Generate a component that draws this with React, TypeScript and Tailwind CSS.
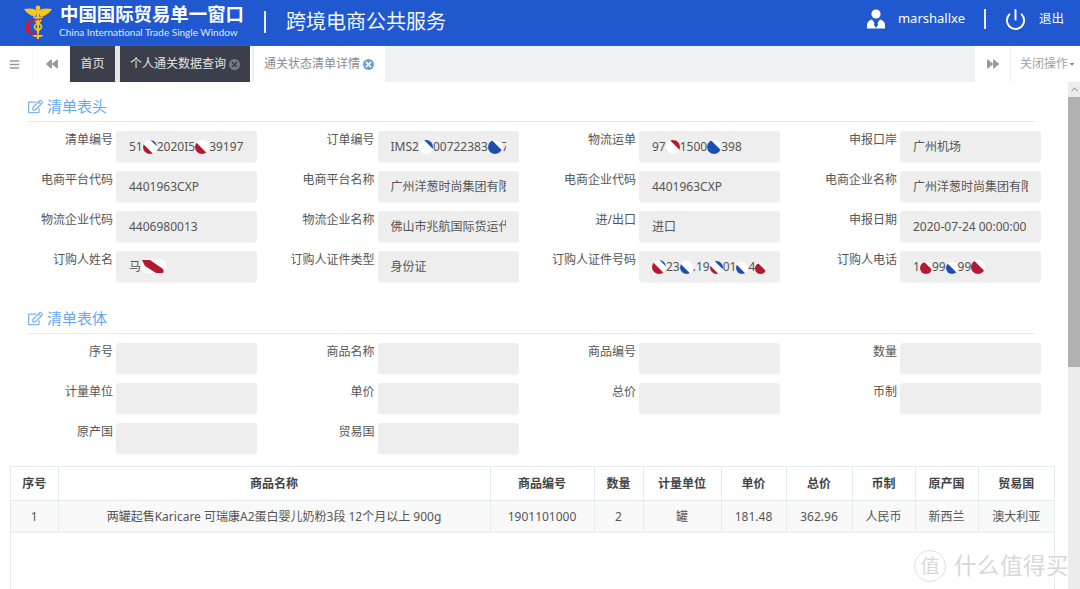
import { useId, type ReactNode } from "react";
import { FaBackward, FaForward, FaRegEdit, FaCaretDown, FaBars } from "react-icons/fa";
import { Power, X, ChevronUp } from "lucide-react";

const RED = "#b5182f";
const BLUE = "#1f4fae";

// 打码的小圆块
function Blob({ w = 14, low, lowY = 11, up, upY = 4 }: { w?: number; low?: string; lowY?: number; up?: string; upY?: number }) {
  const id = useId();
  return (
    <svg viewBox="0 0 16 16" width={w} height={w} className="inline-block align-[-3px]">
      <clipPath id={id}>
        <circle cx="8" cy="8" r="8" />
      </clipPath>
      <circle cx="8" cy="8" r="8" fill="#fff" />
      <g clipPath={`url(#${id})`}>
        <g transform="rotate(45 8 8)">
          {low && <rect x="-6" y={lowY} width="28" height="16" fill={low} />}
          {up && <rect x="-6" y={upY - 16} width="28" height="16" fill={up} />}
        </g>
      </g>
    </svg>
  );
}

function NameBlob() {
  return (
    <svg viewBox="0 0 26 16" width="26" height="16" className="inline-block align-[-3px]">
      <rect x="0" y="1" width="26" height="14" rx="7" fill="#fff" />
      <path d="M1 2h8l13 9c1 2 1 4-1 4h-6L4 8z" fill={RED} />
    </svg>
  );
}

function Logo() {
  return (
    <svg viewBox="0 0 28 36" width="28" height="36" className="shrink-0">
      <path d="M14 7C10 4 5 4 0 5c2 3 3 4 5 5 1 1 3 2 4 2h3zM14 7c4-3 9-3 14-2-2 3-3 4-5 5-1 1-3 2-4 2h-3z" fill="#f6c81c" />
      <circle cx="14" cy="4" r="2.4" fill="#f6c81c" />
      <rect x="13" y="4" width="2" height="31" fill="#f6c81c" />
      <path d="M9 13c8 0 10 3 5 6s-5 6 2 7M19 13c-8 0-10 3-5 6s5 6-2 7" fill="none" stroke="#f6c81c" strokeWidth="1.6" />
      <path d="M21 15C12 13 1 17 1 24c0 6 8 8 16 6-6 0-12-2-12-7 0-5 8-8 16-8z" fill="#d9172b" />
      <path d="M8 31h12l-3 2h-6z" fill="#f6c81c" />
    </svg>
  );
}

function UserIcon() {
  return (
    <svg viewBox="0 0 18 20" width="18" height="20">
      <circle cx="9" cy="5" r="4.6" fill="#fff" />
      <path d="M5 10.500C2 11.500 0 13 0 16v3.500h18V16c0-3-2-4.500-5-5.500L10.500 14l.8 1.500L9 19l-2.300-3.500L7.500 14z" fill="#fff" />
    </svg>
  );
}

function SectionTitle({ children }: { children: ReactNode }) {
  return (
    <div className="ml-[18px] mr-[33px] h-[26px] flex items-center border-b border-[#e7eaec] pb-[4px] text-[15px] text-[#64a8ee]">
      <FaRegEdit className="w-[15px] h-[15px] mr-[4px] text-[#7db4f0]" />
      {children}
    </div>
  );
}

function Field({ label, children }: { label: string; children?: ReactNode }) {
  return (
    <div className="flex">
      <div className="w-[103px] shrink-0 text-right text-[12px] leading-[18px] text-[#555]">{label}</div>
      <div className="ml-[3px] w-[141px] h-[31px] rounded-[3px] bg-[#eeeeee] shadow-[0_1px_1px_rgba(0,0,0,0.04)] pl-[13px] pr-[13px] text-[12px] leading-[31px] text-[#555]">
        <div className="overflow-hidden whitespace-nowrap h-full">{children}</div>
      </div>
    </div>
  );
}

const columns = [
  { title: "序号", value: "1", w: "w-[47px]" },
  { title: "商品名称", value: "两罐起售Karicare 可瑞康A2蛋白婴儿奶粉3段 12个月以上 900g", w: "w-[432px]" },
  { title: "商品编号", value: "1901101000", w: "w-[104px]" },
  { title: "数量", value: "2", w: "w-[49px]" },
  { title: "计量单位", value: "罐", w: "w-[78px]" },
  { title: "单价", value: "181.48", w: "w-[65px]" },
  { title: "总价", value: "362.96", w: "w-[66px]" },
  { title: "币制", value: "人民币", w: "w-[63px]" },
  { title: "原产国", value: "新西兰", w: "w-[63px]" },
  { title: "贸易国", value: "澳大利亚", w: "w-[76px]" },
];

export default function App() {
  return (
    <div className="w-[1080px] h-[589px] overflow-hidden relative flex flex-col bg-white font-['Noto_Sans','Noto_Sans_CJK_SC',sans-serif]">
      {/* 顶部 */}
      <header className="h-[46px] shrink-0 flex items-center bg-[#2058cf] border-b border-[#1d62e0] text-white">
        <div className="ml-[24px] -mt-[2px]">
          <Logo />
        </div>
        <div className="ml-[7px] w-[190px] -mt-[5px]">
          <div className="ml-[1px] text-[18.4px] font-bold leading-[24px] whitespace-nowrap">中国国际贸易单一窗口</div>
          <div className="font-['Lato',sans-serif] text-[10px] leading-[13px] whitespace-nowrap text-[#dfe8fb]">China International Trade Single Window</div>
        </div>
        <div className="ml-[15px] w-[2px] h-[22px] bg-[#e6ecfa] -mt-[2px]" />
        <div className="ml-[20px] text-[20px] leading-[26px] -mt-[1px] text-[#f3f6fd]">跨境电商公共服务</div>
        <div className="ml-auto flex items-center -mt-[7px]">
          <UserIcon />
          <span className="ml-[13px] text-[13px]">marshallxe</span>
          <div className="ml-[19px] w-[2px] h-[20px] bg-[#e6ecfa]" />
          <Power className="ml-[18px] w-[23px] h-[23px]" strokeWidth={2} />
          <span className="ml-[12px] mr-[16px] text-[12.5px]">退出</span>
        </div>
      </header>

      {/* 标签栏 */}
      <nav className="h-[36px] shrink-0 flex items-stretch text-[12px]">
        <div className="w-[33px] flex items-center pl-[9px] border-r border-[#f5f5f5]">
          <FaBars className="w-[11px] h-[11px] text-[#999]" />
        </div>
        <div className="w-[37px] flex items-center pl-[13px]">
          <FaBackward className="w-[12px] h-[12px] text-[#999]" />
        </div>
        <div className="w-[45px] flex items-center justify-center bg-[#3a3f4b] text-[#e4e4e4]">首页</div>
        <div className="w-[5px] bg-[#e4e6e8]" />
        <div className="w-[130px] flex items-center pl-[10px] bg-[#3a3f4b] text-[#e4e4e4]">
          个人通关数据查询
          <span className="ml-[3px] w-[11px] h-[11px] rounded-full bg-[#787c84] flex items-center justify-center">
            <X className="w-[9px] h-[9px] text-[#3a3f4b]" strokeWidth={4} />
          </span>
        </div>
        <div className="w-[4px] bg-white border-r-[2px] border-[#eceeef]" />
        <div className="w-[131px] flex items-center pl-[10px] bg-white text-[#8a8a8a]">
          通关状态清单详情
          <span className="ml-[3px] w-[11px] h-[11px] rounded-full bg-[#6f9fd8] flex items-center justify-center">
            <X className="w-[9px] h-[9px] text-white" strokeWidth={4} />
          </span>
        </div>
        <div className="flex-1 bg-[#eff2f2]" />
        <div className="w-[35px] flex items-center justify-center">
          <FaForward className="w-[12px] h-[12px] text-[#999]" />
        </div>
        <div className="w-[70px] flex items-center pl-[9px] border-l border-[#eeeeee] text-[#a2a2a2]">
          关闭操作
          <FaCaretDown className="w-[8px] h-[8px] text-[#888]" />
        </div>
      </nav>

      <div className="flex-1 min-h-0 flex">
        <main className="flex-1 min-w-0 pt-[14px] pl-[10px]">
          <SectionTitle>清单表头</SectionTitle>
          <div className="mt-[9px] grid grid-cols-[261.5px_261.5px_261px_261px] gap-y-[9px]">
            <Field label="清单编号">
              51<Blob low={RED} lowY={11} up={BLUE} upY={2} />2020I5<Blob low={RED} lowY={9} />391974
            </Field>
            <Field label="订单编号">
              IMS2<Blob up={BLUE} upY={4} />00722383<Blob low={BLUE} lowY={5} />7
            </Field>
            <Field label="物流运单">
              97<Blob up={RED} upY={5} />1500<Blob low={BLUE} lowY={5} />398
            </Field>
            <Field label="申报口岸">广州机场</Field>
            <Field label="电商平台代码">4401963CXP</Field>
            <Field label="电商平台名称">广州洋葱时尚集团有限公司</Field>
            <Field label="电商企业代码">4401963CXP</Field>
            <Field label="电商企业名称">广州洋葱时尚集团有限公司</Field>
            <Field label="物流企业代码">4406980013</Field>
            <Field label="物流企业名称">佛山市兆航国际货运代理有限公司</Field>
            <Field label="进/出口">进口</Field>
            <Field label="申报日期">2020-07-24 00:00:00</Field>
            <Field label="订购人姓名">
              马<NameBlob />
            </Field>
            <Field label="订购人证件类型">身份证</Field>
            <Field label="订购人证件号码">
              <Blob low={RED} lowY={9} up={BLUE} upY={2} />23<Blob w={13} low={BLUE} lowY={10} />.19<Blob w={13} low={RED} lowY={12} up={BLUE} upY={4} />01<Blob w={12} low={BLUE} lowY={10} />4<Blob w={11} low={RED} lowY={5} />
            </Field>
            <Field label="订购人电话">
              1<Blob w={12} low={RED} lowY={4} />99<Blob w={12} low={BLUE} lowY={8} />99<Blob low={RED} lowY={6} />
            </Field>
          </div>

          <div className="mt-[26px]">
            <SectionTitle>清单表体</SectionTitle>
          </div>
          <div className="mt-[9px] grid grid-cols-[261.5px_261.5px_261px_261px] gap-y-[9px]">
            <Field label="序号" />
            <Field label="商品名称" />
            <Field label="商品编号" />
            <Field label="数量" />
            <Field label="计量单位" />
            <Field label="单价" />
            <Field label="总价" />
            <Field label="币制" />
            <Field label="原产国" />
            <Field label="贸易国" />
          </div>

          {/* 表格 */}
          <div className="mt-[12px] w-[1045px] h-[200px] border-x border-[#e7eaec]">
            <table className="w-full table-fixed border-collapse text-[12px] text-center">
              <thead>
                <tr className="h-[34px] border-y border-[#e7eaec]">
                  {columns.map((c) => (
                    <th key={c.title} className={`${c.w} border-l first:border-l-0 border-[#e7eaec] font-bold text-[#444]`}>
                      {c.title}
                    </th>
                  ))}
                </tr>
              </thead>
              <tbody>
                <tr className="h-[31px] bg-[#f9f9f9] border-b-2 border-[#eef1f2]">
                  {columns.map((c) => (
                    <td key={c.title} className="pt-[2px] border-l first:border-l-0 border-[#e7eaec] text-[#555] whitespace-nowrap">
                      {c.value}
                    </td>
                  ))}
                </tr>
              </tbody>
            </table>
          </div>
        </main>

        {/* 滚动条 */}
        <div className="w-[12px] shrink-0 flex flex-col bg-[#ececec]">
          <div className="h-[15px] flex items-center justify-center">
            <ChevronUp className="w-[11px] h-[11px] text-[#777]" strokeWidth={2} />
          </div>
          <div className="h-[270px] bg-[#b2b2b2]" />
        </div>
      </div>

      {/* 水印 */}
      <div className="absolute left-[914px] top-[550px] flex items-center text-[#d8d8d8]">
        <div className="w-[32px] h-[32px] rounded-full border-[1.5px] border-[#e2e2e2] flex items-center justify-center text-[19px] leading-none">值</div>
        <div className="ml-[8px] text-[22.5px] leading-[32px] whitespace-nowrap tracking-[0.5px]">什么值得买</div>
      </div>
    </div>
  );
}
